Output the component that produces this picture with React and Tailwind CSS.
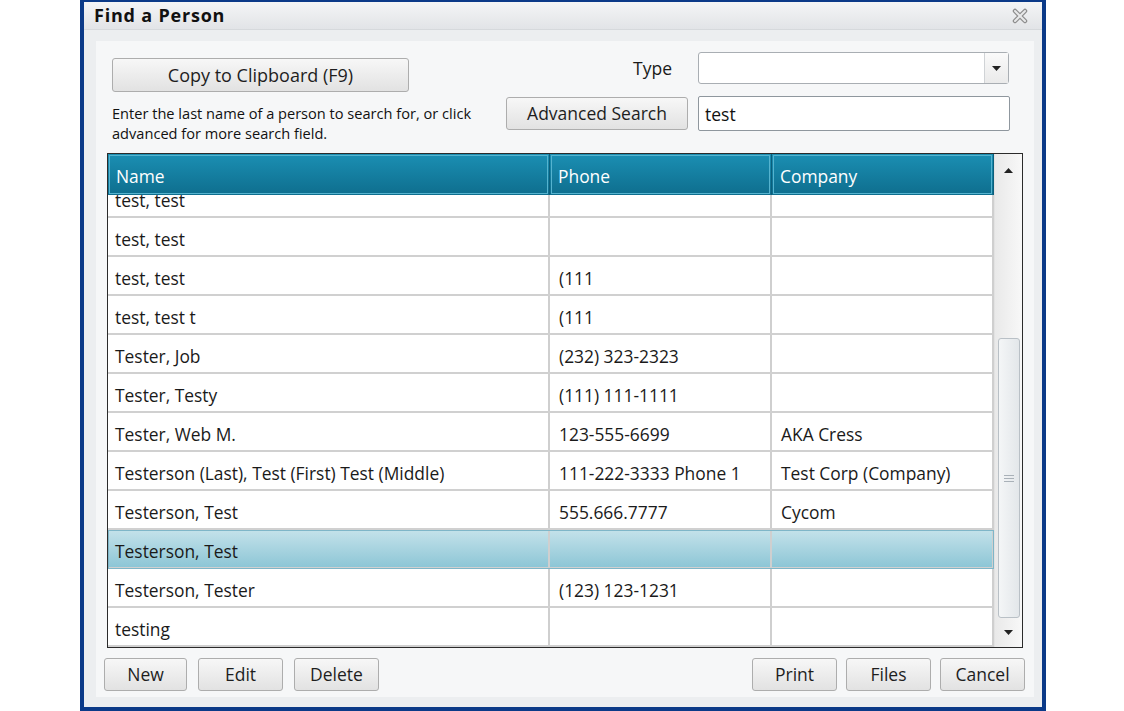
const rows = [
  { name: 'test, test', phone: '', company: '' },
  { name: 'test, test', phone: '', company: '' },
  { name: 'test, test', phone: '(111', company: '' },
  { name: 'test, test t', phone: '(111', company: '' },
  { name: 'Tester, Job', phone: '(232) 323-2323', company: '' },
  { name: 'Tester, Testy', phone: '(111) 111-1111', company: '' },
  { name: 'Tester, Web M.', phone: '123-555-6699', company: 'AKA Cress' },
  { name: 'Testerson (Last), Test (First) Test (Middle)', phone: '111-222-3333 Phone 1', company: 'Test Corp (Company)' },
  { name: 'Testerson, Test', phone: '555.666.7777', company: 'Cycom' },
  { name: 'Testerson, Test', phone: '', company: '', selected: true },
  { name: 'Testerson, Tester', phone: '(123) 123-1231', company: '' },
  { name: 'testing', phone: '', company: '' },
];

const font = { fontFamily: '"Open Sans", "Noto Sans", sans-serif' };

const Button = ({ children, className = '' }) => (
  <button
    className={`flex items-center justify-center rounded-[3px] border border-[#adadad] bg-gradient-to-b from-[#f7f7f7] to-[#e2e2e2] text-[17.5px] text-[#1e1e1e] ${className}`}
  >
    {children}
  </button>
);

const CloseIcon = () => (
  <svg width="16" height="16" viewBox="0 0 16 16">
    <path d="M3 3l10 10M13 3L3 13" stroke="#8d8d8d" strokeWidth="4.5" strokeLinecap="round" />
    <path d="M3 3l10 10M13 3L3 13" stroke="#e8e9ea" strokeWidth="2" strokeLinecap="round" />
  </svg>
);

const Row = ({ row }) => (
  <div
    className={`flex h-[39px] shrink-0 border-b-2 text-[17.4px] text-[#1a1a1a] ${
      row.selected
        ? 'border-[#d0d0d0] bg-gradient-to-b from-[#c4e2ea] to-[#8dc6d6] outline outline-1 -outline-offset-1 outline-[#7fb6c8]'
        : 'border-[#d0d0d0] bg-white'
    }`}
  >
    <div className="flex w-[442px] items-center whitespace-nowrap border-r-2 border-[#cfcfcf] pl-[7px] pt-[6px]">{row.name}</div>
    <div className="flex w-[222px] items-center whitespace-nowrap border-r-2 border-[#cfcfcf] pl-[9px] pt-[6px]">{row.phone}</div>
    <div className="flex w-[222px] items-center whitespace-nowrap border-r-2 border-[#cfcfcf] pl-[9px] pt-[6px]">{row.company}</div>
  </div>
);

const HeaderCell = ({ label, width }) => (
  <div className={`${width} h-full border-r border-[#0b5f7c] p-[1px]`}>
    <div className="flex h-full items-center border border-[#55b3cf] pl-[6px] pt-[3px] text-[17.4px] text-white">
      {label}
    </div>
  </div>
);

export default function App() {
  return (
    <div className="flex h-[711px] w-[1124px] bg-white pl-[80px]" style={font}>
      <div className="flex h-[711px] w-[966px] flex-col border-x-[4px] border-b-[4px] border-t-[2px] border-[#0b3a88] bg-[#eceef0]">
        {/* title bar */}
        <div className="flex h-[28px] shrink-0 items-center justify-between border-b border-[#d6d9dc] bg-gradient-to-b from-[#f4f5f6] to-[#e2e4e7] pl-[10px] pr-[14px]">
          <span className="text-[18px] font-bold tracking-[0.8px] text-[#111]">Find a Person</span>
          <CloseIcon />
        </div>

        <div className="mb-[10px] ml-[12px] mr-[8px] mt-[11px] flex flex-1 flex-col bg-[#f6f7f8]">
          {/* search controls */}
          <div className="flex">
            <div className="ml-[16px] flex w-[394px] flex-col">
              <Button className="mt-[17px] h-[34px] w-[297px] text-[18px]">Copy to Clipboard (F9)</Button>
              <p className="mt-[11px] whitespace-nowrap text-[14.6px] leading-[20px] text-[#111]">
                Enter the last name of a person to search for, or click
                <br />
                advanced for more search field.
              </p>
            </div>
            <div className="mt-[11px] flex flex-col gap-[11px]">
              <div className="flex h-[32px] items-center">
                <div className="w-[182px] pr-[16px] text-right text-[17.5px] text-[#1a1a1a]">Type</div>
                <div className="ml-[10px] flex h-[32px] w-[311px] rounded-[3px] border border-[#a9aeb3] bg-white">
                  <div className="flex-1" />
                  <div className="flex w-[24px] items-center justify-center border-l border-[#d0d3d6] bg-gradient-to-b from-[#fafafa] to-[#eaeaea]">
                    <svg width="9" height="5" viewBox="0 0 9 5">
                      <path d="M0 0h9L4.5 5z" fill="#222" />
                    </svg>
                  </div>
                </div>
              </div>
              <div className="flex h-[36px] items-center">
                <Button className="h-[33px] w-[182px]">Advanced Search</Button>
                <div className="ml-[10px] flex h-[35px] w-[312px] items-center rounded-[2px] border border-[#8f979e] bg-white pl-[6px] pt-[2px] text-[17.5px] text-[#111]">
                  test
                </div>
              </div>
            </div>
          </div>

          {/* results grid */}
          <div className="ml-[11px] mt-[10px] flex h-[495px] w-[916px] border border-[#2b2b2b] bg-white">
            <div className="flex w-[886px] flex-col overflow-hidden">
              <div className="relative z-10 flex h-[41px] shrink-0 bg-gradient-to-b from-[#1b8fb3] to-[#0e6e8e]">
                <HeaderCell label="Name" width="w-[442px]" />
                <HeaderCell label="Phone" width="w-[222px]" />
                <HeaderCell label="Company" width="w-[222px]" />
              </div>
              <div className="-mt-[16px] flex flex-col">
                {rows.map((row, i) => (
                  <Row key={i} row={row} />
                ))}
              </div>
            </div>
            {/* scrollbar */}
            <div className="flex w-[28px] flex-col items-center border-l border-[#e2e2e2] bg-gradient-to-r from-[#e9e9e9] to-[#f8f8f8]">
              <div className="flex h-[32px] items-center justify-center">
                <svg width="9" height="5" viewBox="0 0 9 5">
                  <path d="M0 5h9L4.5 0z" fill="#222" />
                </svg>
              </div>
              <div className="mt-[152px] flex h-[280px] w-[22px] items-center justify-center rounded-[3px] border border-[#b9c0c6] bg-gradient-to-r from-[#f4f6f7] to-[#e3e7ea]">
                <div className="flex w-[10px] flex-col gap-[2px]">
                  <div className="h-[1px] bg-[#a9b1b8]" />
                  <div className="h-[1px] bg-[#a9b1b8]" />
                  <div className="h-[1px] bg-[#a9b1b8]" />
                </div>
              </div>
              <div className="flex flex-1 items-center justify-center">
                <svg width="9" height="5" viewBox="0 0 9 5">
                  <path d="M0 0h9L4.5 5z" fill="#222" />
                </svg>
              </div>
            </div>
          </div>

          {/* actions */}
          <div className="mt-[10px] flex items-center pl-[8px] pr-[9px]">
            <div className="flex gap-[11px]">
              <Button className="h-[33px] w-[83px]">New</Button>
              <Button className="h-[33px] w-[85px]">Edit</Button>
              <Button className="h-[33px] w-[85px]">Delete</Button>
            </div>
            <div className="ml-auto flex gap-[9px]">
              <Button className="h-[33px] w-[85px]">Print</Button>
              <Button className="h-[33px] w-[85px]">Files</Button>
              <Button className="h-[33px] w-[85px]">Cancel</Button>
            </div>
          </div>
        </div>
      </div>
    </div>
  );
}
